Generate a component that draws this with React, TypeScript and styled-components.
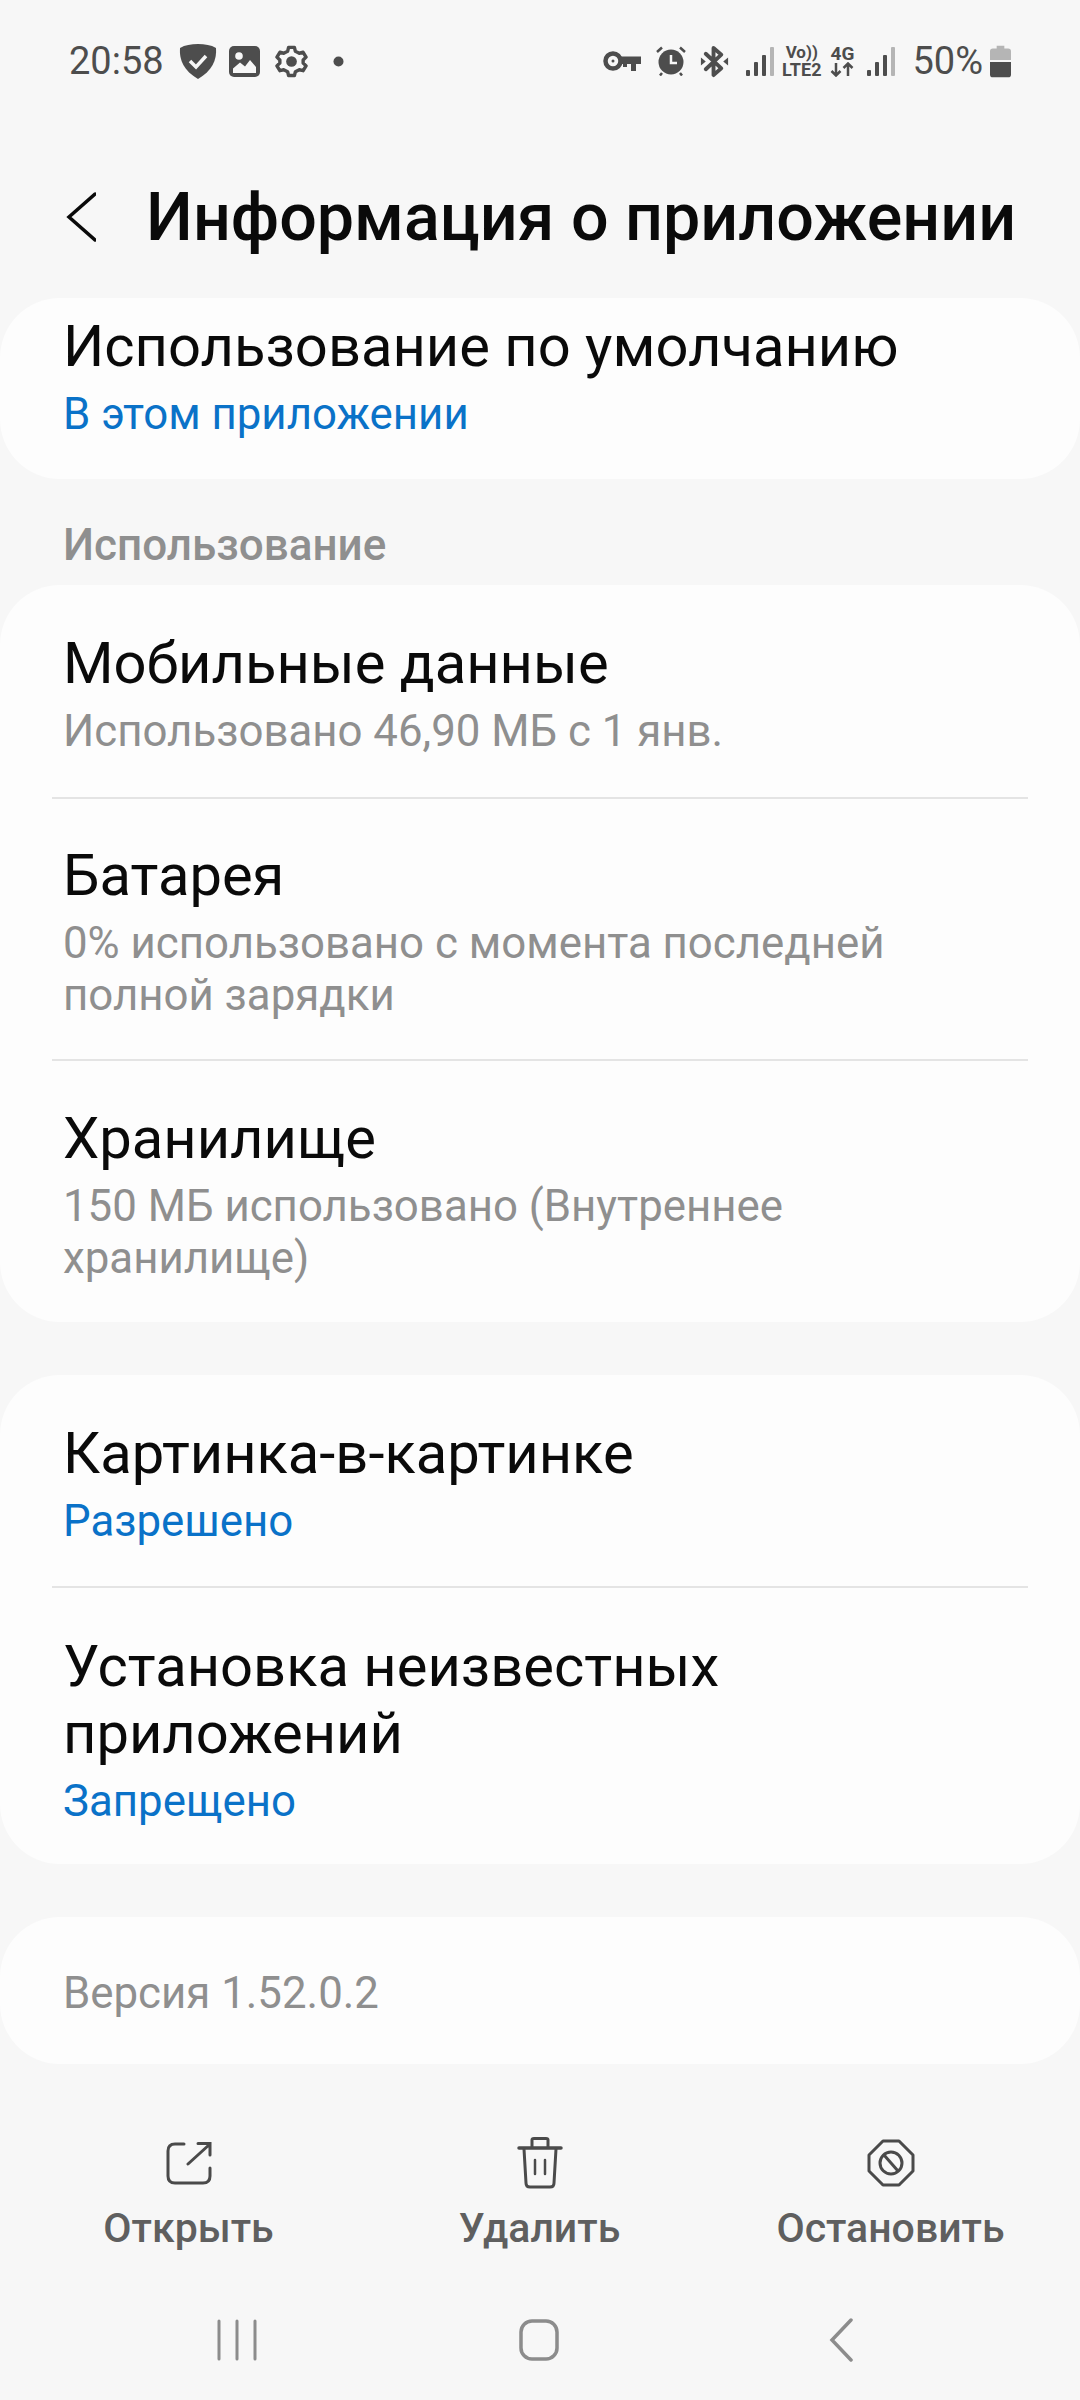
import React from 'react';
import styled, { createGlobalStyle } from 'styled-components';

const GlobalStyle = createGlobalStyle`
    html, body {
        margin: 0;
        padding: 0;
        background: #f7f7f7;
    }
`;

const Page = styled.div`
    width: 1080px;
    height: 2400px;
    overflow: hidden;
    background: #f7f7f7;
    font-family: Roboto, 'Noto Sans', sans-serif;
    display: flex;
    flex-direction: column;
`;

const StatusBar = styled.div`
    height: 60px;
    padding: 31px 69px 0 69px;
    display: flex;
    align-items: center;
    color: #4d4d4d;
`;

const Clock = styled.span`
    font-size: 38px;
`;

const StatusRight = styled.div`
    margin-left: auto;
    display: flex;
    align-items: center;
`;

const Spacer = styled.span<{ $w: number }>`
    width: ${(p) => p.$w}px;
    flex: none;
`;

const Percent = styled.span`
    font-size: 38px;
`;

const MiniStack = styled.div`
    display: flex;
    flex-direction: column;
    align-items: center;
`;

const MiniText = styled.div<{ $size: number }>`
    font-size: ${(p) => p.$size}px;
    font-weight: 700;
    line-height: 17px;
    color: #4d4d4d;
    white-space: nowrap;
`;

const Header = styled.div`
    height: 130px;
    margin-top: 61px;
    padding-left: 66px;
    display: flex;
    align-items: center;
    gap: 50px;
`;

const Title = styled.h1`
    margin: 0;
    font-size: 66.400px;
    font-weight: 500;
    color: #0a0a0a;
    white-space: nowrap;
`;

const Card = styled.div<{ $top: number }>`
    margin-top: ${(p) => p.$top}px;
    background: #fdfdfd;
    border-radius: 60px;
    display: flex;
    flex-direction: column;
`;

const Row = styled.div<{ $height: number; $pad?: number }>`
    height: ${(p) => p.$height}px;
    box-sizing: border-box;
    padding: ${(p) => p.$pad ?? 45}px 64px 0 63px;
    display: flex;
    flex-direction: column;
    gap: 8px;
`;

const Divider = styled.div`
    height: 2px;
    margin: 0 52px;
    background: #e4e4e4;
`;

const RowTitle = styled.div`
    font-size: 57.900px;
    line-height: 67px;
    color: #0a0a0a;
`;

const RowSub = styled.div<{ $blue?: boolean }>`
    font-size: 43.800px;
    line-height: 52px;
    color: ${(p) => (p.$blue ? '#0a72c8' : '#8f8f8f')};
`;

const SectionTitle = styled.div`
    margin-top: 46px;
    padding-left: 63px;
    height: 40px;
    line-height: 40px;
    font-size: 44px;
    font-weight: 500;
    color: #8f8f8f;
`;

const BottomBar = styled.div`
    margin-top: 73px;
    display: grid;
    grid-template-columns: repeat(3, 351px);
    padding-left: 13px;
`;

const Action = styled.div`
    display: flex;
    flex-direction: column;
    align-items: center;
    gap: 15px;
    font-size: 41px;
    line-height: 48px;
    font-weight: 500;
    color: #5f5f5f;
`;

const ActionIcon = styled.div`
    height: 52px;
    display: flex;
    align-items: center;
    justify-content: center;
`;

const NavBar = styled.div`
    margin-top: 66px;
    display: grid;
    grid-template-columns: repeat(3, 302px);
    padding-left: 86px;
    justify-items: center;
    align-items: center;
`;

const Shield = () => (
    <svg width="38" height="36" viewBox="0 0 38 36">
        <path d="M19 1C26 1 32 2 37 5C38 17 33 28 19 36C5 28 0 17 1 5C6 2 12 1 19 1Z" fill="#4d4d4d" />
        <path d="M11 18L17 24L27 13" fill="none" stroke="#f7f7f7" strokeWidth="3.500" />
    </svg>
);

const Picture = () => (
    <svg width="31" height="31" viewBox="0 0 31 31">
        <rect x="0" y="0" width="31" height="31" rx="5" fill="#4d4d4d" />
        <circle cx="10" cy="10" r="3.800" fill="#f7f7f7" />
        <path d="M4 27V22.500L11 16.500L16 20.500L21 14L27 21V27Z" fill="#f7f7f7" />
    </svg>
);

const Gear = () => (
    <svg width="33" height="34" viewBox="0 0 34 34">
        <path d="M14 3H20L21 7L25 9L29 8L32 13L29 16V19L32 22L29 27L25 26L21 28L20 32H14L13 28L9 26L5 27L2 22L5 19V16L2 13L5 8L9 9L13 7Z" fill="none" stroke="#4d4d4d" strokeWidth="3.500" strokeLinejoin="round" />
        <circle cx="17" cy="17.500" r="5.500" fill="#4d4d4d" />
    </svg>
);

const Dot = () => (
    <svg width="11" height="11" viewBox="0 0 11 11">
        <circle cx="5.500" cy="5.500" r="5" fill="#4d4d4d" />
    </svg>
);

const KeyIcon = () => (
    <svg width="38" height="21" viewBox="0 0 38 21">
        <circle cx="10" cy="10" r="7.500" fill="none" stroke="#4d4d4d" strokeWidth="4.500" />
        <circle cx="10" cy="10" r="1.500" fill="#4d4d4d" />
        <path d="M17 5.500H38V13H33V20H28V13H24V16H20V13H17Z" fill="#4d4d4d" />
    </svg>
);

const AlarmIcon = () => (
    <svg width="30" height="30" viewBox="0 0 30 30">
        <circle cx="15" cy="16" r="12.500" fill="#4d4d4d" />
        <path d="M15 9V17H21" fill="none" stroke="#f7f7f7" strokeWidth="2.500" />
        <path d="M1 6L6 1.500M29 6L24 1.500M6 27L4 29.500M24 27L26 29.500" stroke="#4d4d4d" strokeWidth="2.500" />
    </svg>
);

const BluetoothIcon = () => (
    <svg width="29" height="33" viewBox="0 0 28 34">
        <path d="M5 9L21 24L13 31V3L21 10L5 25" fill="none" stroke="#4d4d4d" strokeWidth="4" strokeLinejoin="round" strokeLinecap="round" />
        <path d="M0 13L5 17L0 21ZM28 13L23 17L28 21Z" fill="#4d4d4d" />
    </svg>
);

const Signal = () => (
    <svg width="28" height="29" viewBox="0 0 28 29">
        <rect x="0" y="23" width="4" height="6" rx="1" fill="#4d4d4d" />
        <rect x="8" y="15" width="4" height="14" rx="1" fill="#4d4d4d" />
        <rect x="16" y="8" width="4" height="21" rx="1" fill="#4d4d4d" />
        <rect x="24" y="0" width="4" height="29" rx="1" fill="#b5b5b5" />
    </svg>
);

const DataArrows = () => (
    <svg width="24" height="15" viewBox="0 0 24 15">
        <path d="M6 1V13M1.500 9L6 13.500L10.500 9M18 14V2M13.500 6L18 1.500L22.500 6" fill="none" stroke="#4d4d4d" strokeWidth="2.500" />
    </svg>
);

const Battery = () => (
    <svg width="21" height="33" viewBox="0 0 22 33">
        <path d="M7 0H15V3H19Q22 3 22 6V15H0V6Q0 3 3 3H7Z" fill="#b5b5b5" />
        <path d="M0 17H22V30Q22 33 19 33H3Q0 33 0 30Z" fill="#4d4d4d" />
    </svg>
);

const OpenIcon = () => (
    <svg width="46" height="44" viewBox="0 0 46 44">
        <path d="M18 3H9Q2 3 2 10V35Q2 42 9 42H37Q44 42 44 35V27" fill="none" stroke="#4a4a4a" strokeWidth="3" strokeLinecap="round" />
        <path d="M22 23L44 3M32 2.500H44V14" fill="none" stroke="#4a4a4a" strokeWidth="3" strokeLinecap="round" />
    </svg>
);

const TrashIcon = () => (
    <svg width="46" height="52" viewBox="0 0 46 52">
        <path d="M2 11H44" stroke="#4a4a4a" strokeWidth="3.500" strokeLinecap="round" />
        <path d="M15 10V3Q15 1.500 17 1.500H29Q31 1.500 31 3V10" fill="none" stroke="#4a4a4a" strokeWidth="3" />
        <path d="M7 12L9 46Q9 50 13 50H33Q37 50 37 46L39 12" fill="none" stroke="#4a4a4a" strokeWidth="3" />
        <path d="M18 23V37M28 23V37" stroke="#4a4a4a" strokeWidth="2.500" strokeLinecap="round" />
    </svg>
);

const StopIcon = () => (
    <svg width="48" height="48" viewBox="0 0 48 48">
        <path d="M16 2H32L46 16V32L32 46H16L2 32V16Z" fill="none" stroke="#4a4a4a" strokeWidth="3" strokeLinejoin="round" />
        <circle cx="24" cy="24" r="11" fill="none" stroke="#4a4a4a" strokeWidth="3" />
        <path d="M17 16L31 32" stroke="#4a4a4a" strokeWidth="3" />
    </svg>
);

const App: React.FC = () => {
    return (
        <Page>
            <GlobalStyle />
            <StatusBar>
                <Clock>20:58</Clock>
                <Spacer $w={15} />
                <Shield />
                <Spacer $w={12} />
                <Picture />
                <Spacer $w={15} />
                <Gear />
                <Spacer $w={25} />
                <Dot />
                <StatusRight>
                    <KeyIcon />
                    <Spacer $w={15} />
                    <AlarmIcon />
                    <Spacer $w={14} />
                    <BluetoothIcon />
                    <Spacer $w={17} />
                    <Signal />
                    <Spacer $w={8} />
                    <MiniStack>
                        <MiniText $size={17}>Vo))</MiniText>
                        <MiniText $size={18}>LTE2</MiniText>
                    </MiniStack>
                    <Spacer $w={9} />
                    <MiniStack>
                        <MiniText $size={19}>4G</MiniText>
                        <DataArrows />
                    </MiniStack>
                    <Spacer $w={13} />
                    <Signal />
                    <Spacer $w={17} />
                    <Percent>50%</Percent>
                    <Spacer $w={7} />
                    <Battery />
                </StatusRight>
            </StatusBar>

            <Header>
                <svg width="30" height="50" viewBox="0 0 30 50">
                    <path d="M29 2L3 25L29 48" fill="none" stroke="#0a0a0a" strokeWidth="3.500" strokeLinecap="round" />
                </svg>
                <Title>Информация о приложении</Title>
            </Header>

            <Card $top={16}>
                <Row $height={181} $pad={15}>
                    <RowTitle>Использование по умолчанию</RowTitle>
                    <RowSub $blue>В этом приложении</RowSub>
                </Row>
            </Card>

            <SectionTitle>Использование</SectionTitle>

            <Card $top={20}>
                <Row $height={212}>
                    <RowTitle>Мобильные данные</RowTitle>
                    <RowSub>Использовано 46,90 МБ с 1 янв.</RowSub>
                </Row>
                <Divider />
                <Row $height={260} $pad={43}>
                    <RowTitle>Батарея</RowTitle>
                    <RowSub>0% использовано с момента последней полной зарядки</RowSub>
                </Row>
                <Divider />
                <Row $height={261} $pad={44}>
                    <RowTitle>Хранилище</RowTitle>
                    <RowSub>150 МБ использовано (Внутреннее хранилище)</RowSub>
                </Row>
            </Card>

            <Card $top={53}>
                <Row $height={211}>
                    <RowTitle>Картинка-в-картинке</RowTitle>
                    <RowSub $blue>Разрешено</RowSub>
                </Row>
                <Divider />
                <Row $height={276}>
                    <RowTitle>Установка неизвестных приложений</RowTitle>
                    <RowSub $blue>Запрещено</RowSub>
                </Row>
            </Card>

            <Card $top={53}>
                <Row $height={147} $pad={50}>
                    <RowSub>Версия 1.52.0.2</RowSub>
                </Row>
            </Card>

            <BottomBar>
                <Action><ActionIcon><OpenIcon /></ActionIcon>Открыть</Action>
                <Action><ActionIcon><TrashIcon /></ActionIcon>Удалить</Action>
                <Action><ActionIcon><StopIcon /></ActionIcon>Остановить</Action>
            </BottomBar>

            <NavBar>
                <svg width="40" height="42" viewBox="0 0 40 42">
                    <path d="M2 2V40M20 2V40M38 2V40" stroke="#8c8c8c" strokeWidth="3" strokeLinecap="round" />
                </svg>
                <svg width="40" height="42" viewBox="0 0 40 42">
                    <rect x="2" y="2" width="36" height="38" rx="11" fill="none" stroke="#8c8c8c" strokeWidth="3.500" />
                </svg>
                <svg width="24" height="44" viewBox="0 0 24 44">
                    <path d="M22 2L3 22L22 42" fill="none" stroke="#8c8c8c" strokeWidth="3.500" strokeLinecap="round" />
                </svg>
            </NavBar>
        </Page>
    );
};

export default App;
